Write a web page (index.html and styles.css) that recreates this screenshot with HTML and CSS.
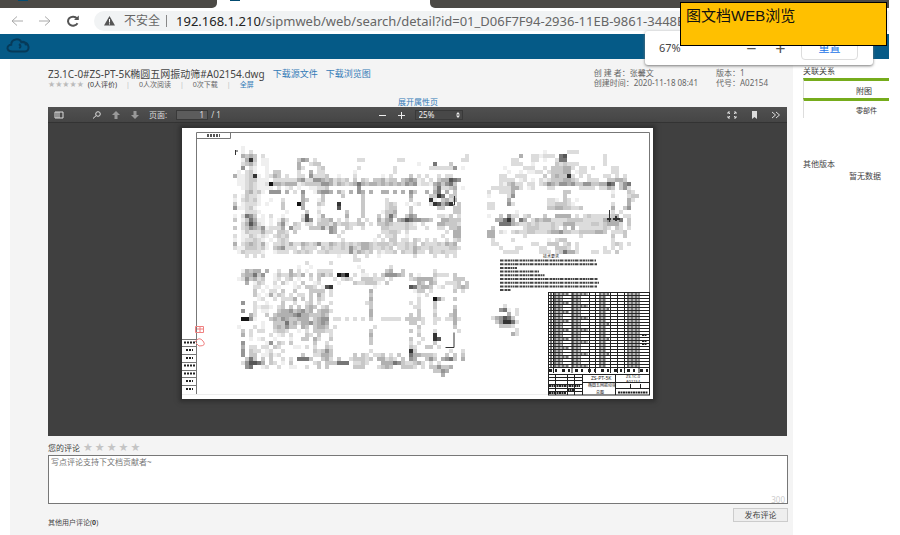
FILE: index.html
```html
<!DOCTYPE html>
<html lang="zh-CN">
<head>
<meta charset="utf-8">
<title>图文档WEB浏览</title>
<link rel="stylesheet" href="styles.css">
</head>
<body>
<div class="screen">
  <header class="browser">
    <div class="tabs"><span class="tab tab-left"></span><span class="tab tab-active"></span><span class="tab tab-right"></span></div>
    <div class="address-row">
      <button class="nav-btn" aria-label="后退"><svg viewBox="0 0 14 12"><path d="M13 6H2M7 1.500L2 6l5 4.500"/></svg></button>
      <button class="nav-btn" aria-label="前进"><svg viewBox="0 0 14 12"><path d="M1 6h11M7 1.500L12 6l-5 4.500"/></svg></button>
      <button class="nav-btn reload" aria-label="刷新"><svg viewBox="0 0 14 12"><path d="M11.500 8.200A5 4.500 0 1 1 11 3.400"/><path class="solid" d="M12.800 .5v4.500H8z"/></svg></button>
      <div class="url">
        <svg class="warn" viewBox="0 0 11 10"><path d="M5.500 0L11 9.500H0z" fill="#555"/><path d="M5.500 3v3.500M5.500 7.300v1.200" stroke="#fff"/></svg>
        <span class="unsafe">不安全</span><span class="divider"></span>
        <span class="address"><b>192.168.1.210</b>/sipmweb/web/search/detail?id=01_D06F7F94-2936-11EB-9861-3448E</span>
      </div>
    </div>
  </header>
  <nav class="brand">
    <svg class="cloud" viewBox="0 0 24 15"><path d="M7 13.500C-.5 14 .5 6.800 5.200 6.800C5.200 0 14 .2 15.300 4.200C18.500 3 20.200 5.500 19.500 7.400M15.300 4.200C24.500 3.500 24 13.500 19 13.500H7M13 6.200C15 7.500 15 9 13.200 10.300"/></svg>
  </nav>
  <div class="columns">
    <main class="main">
      <div class="doc-head">
        <div class="doc-left">
          <div class="title-row"><h1>Z3.1C-0#ZS-PT-5K椭圆五网振动筛#A02154.dwg</h1><a href="#">下载源文件</a><a href="#">下载浏览图</a></div>
          <div class="stats"><span class="stars">★★★★★</span><span class="votes">(0人评价)</span><i>|</i><span>0人次阅读</span><i>|</i><span>0次下载</span><i>|</i><a href="#">全屏</a></div>
        </div>
        <div class="doc-info">
          <div><p>创 建 者：张馨文</p><p>创建时间：2020-11-18 08:41</p></div>
          <div><p>版本：1</p><p>代号：A02154</p></div>
        </div>
      </div>
      <a class="expand" href="#">展开属性页</a>
      <section class="viewer">
        <div class="toolbar">
          <div class="tool-group">
            <button class="tool side" aria-label="侧栏"><svg viewBox="0 0 10 8"><path d="M1 1h8v6H1zM3 1v6M5 1v6"/></svg></button>
            <button class="tool" aria-label="查找"><svg viewBox="0 0 10 8"><circle cx="6" cy="3" r="2.300"/><path d="M4.200 4.600L1 7.500"/></svg></button>
            <button class="tool dim" aria-label="上一页"><svg viewBox="0 0 10 8"><path class="solid" d="M5 0l4 4H6.500v4h-3V4H1z"/></svg></button>
            <button class="tool dim" aria-label="下一页"><svg viewBox="0 0 10 8"><path class="solid" d="M5 8l4-4H6.500V0h-3v4H1z"/></svg></button>
            <label for="page">页面:</label><input id="page" value="1"><span>/ 1</span>
          </div>
          <div class="tool-group zooming">
            <button class="tool" aria-label="缩小"><svg viewBox="0 0 10 8"><path d="M2 4.500h7"/></svg></button>
            <button class="tool" aria-label="放大"><svg viewBox="0 0 10 8"><path d="M2 4.500h7M5.500 1v7"/></svg></button>
            <div class="select-wrap"><select aria-label="缩放"><option>25%</option></select><svg viewBox="0 0 6 8"><path class="solid" d="M3 1l2 2.500H1zM3 7l2-2.500H1z"/></svg></div>
          </div>
          <div class="tool-group right">
            <button class="tool" aria-label="全屏"><svg viewBox="0 0 10 8"><path d="M1 3V1h2M7 1h2v2M9 5v2H7M3 7H1V5M1 1l2 2M9 1L7 3M9 7L7 5M1 7l2-2"/></svg></button>
            <button class="tool" aria-label="书签"><svg viewBox="0 0 10 8"><path class="solid" d="M3 0h5v8L5.500 6 3 8z"/></svg></button>
            <button class="tool" aria-label="更多"><svg viewBox="0 0 10 8"><path d="M1 1l3.500 3L1 7M5 1l3.500 3L5 7"/></svg></button>
          </div>
        </div>
        <div class="canvas">
          <svg class="sheet" id="sheet" viewBox="182 128 471 271" role="img" aria-label="工程图">
            <g fill="none" stroke="#777"><path d="M196.500 394V132.500H649.500V394M196.500 138.500h34v-6"/><path d="M182 394.500h467" stroke="#eee"/></g>
            <path d="M207 135.500h13" stroke="#555" stroke-width="3" stroke-dasharray="2 1"/>
            <g id="mosaic" shape-rendering="crispEdges"></g>
            <g fill="none" stroke="#333"><path d="M235.500 150v5M236 151h2M445.500 347.500h8.500v-15M451.500 205h3v-9M609.500 210v12"/><path d="M607 219h4M613 219h7M616 216v5" stroke-width="2"/></g>
            <g class="stamp"><path d="M195.500 326.500h8v6h-8zM197 329h6M200 326v7M195 342q4-6 8-1t-4 5l-3-3"/></g>
            <path d="M182 339.500h14M182 346.500h14M182 354.500h14M182 362.500h14M182 370.500h14M182 377.500h14M182 385.500h14" stroke="#777"/>
            <path d="M184 342.500h11M184 365.500h11M184 373.500h11M186 350h7M186 358h7M186 381h7M186 389h7" stroke="#222" stroke-width="2" stroke-dasharray="2 1"/>
            <text x="543" y="258" class="tiny">技术要求</text>
            <g id="notes"></g><g id="bom"></g>
            <text x="591" y="380" class="label">ZS-PT-5K</text><text x="588" y="387" class="tiny">椭圆五网振动筛</text><text x="596" y="394" class="tiny">总图</text>
            <text x="626" y="378" class="tiny">Z3.1C-0</text><text x="626" y="383" class="tiny">A02154</text>
          </svg>
        </div>
      </section>
      <section class="comments">
        <div class="rate"><label for="comment">您的评论</label><span class="big-stars">★★★★★</span></div>
        <div class="comment-box"><textarea id="comment" placeholder="写点评论支持下文档贡献者~"></textarea><span class="count">300</span></div>
        <div class="submit-row"><button class="submit">发布评论</button></div>
        <p class="others">其他用户评论(<b>0</b>)</p>
      </section>
    </main>
    <aside class="sidebar">
      <h2>关联关系</h2>
      <a class="related" href="#">附图</a>
      <a class="related second" href="#">零部件</a>
      <h2 class="versions">其他版本</h2>
      <p class="empty">暂无数据</p>
    </aside>
  </div>
  <div class="zoom-popup"><span>67%</span><button class="zoom-btn" aria-label="缩小页面">−</button><button class="zoom-btn" aria-label="放大页面">+</button><button class="reset">重置</button></div>
  <div class="callout">图文档WEB浏览</div>
</div>
<script src="drawing.js"></script>
</body>
</html>
```
FILE: styles.css
```css
* { box-sizing: border-box; }
body { margin: 0; background: #fff; color: #444; font: 8px/10px "Noto Sans", "Noto Sans CJK SC", sans-serif; }
h1, h2, p { margin: 0; font-weight: 400; }
a { color: #337ab7; text-decoration: none; }
button, input, select, textarea { font: inherit; color: inherit; margin: 0; padding: 0; border: 0; background: none; }
svg { display: block; fill: none; stroke: currentColor; }
.solid { fill: currentColor; stroke: none; }
.screen { position: relative; margin-right: 11px; min-height: 100vh; display: flex; flex-direction: column; }

.tabs { display: flex; height: 8px; }
.tab { background: #4b4945; }
.tab-left { flex: 217; border-radius: 0 0 5px 0; background: linear-gradient(#034b70, #034b70) 18px 0 / 10px 1px no-repeat #4b4945; }
.tab-active { flex: 213; background: linear-gradient(#034b70, #034b70) 13px 0 / 10px 1px no-repeat #fff; }
.tab-right { flex: 459; border-radius: 0 0 0 5px; }
.address-row { display: flex; align-items: center; height: 26px; padding-left: 10px; gap: 14px; }
.nav-btn { width: 14px; height: 12px; color: #aaa; }
.reload { color: #555; stroke-width: 2px; }
.url { flex: 1; min-width: 0; height: 20px; display: flex; align-items: center; padding-left: 10px; border-radius: 10px 0 0 10px; background: #f1f3f4; color: #666; font-size: 13px; line-height: 20px; overflow: hidden; white-space: nowrap; }
.warn { width: 11px; height: 10px; stroke: none; }
.unsafe { margin-left: 9px; font-size: 12px; }
.divider { width: 1px; height: 12px; margin: 0 9px 0 6px; background: #888; }
.address b { font-weight: 400; color: #222; }
.brand { height: 25px; padding: 4px 6px; background: #055a87; color: #063a59; }
.cloud { width: 24px; height: 15px; stroke-width: 2px; }

.columns { flex: 1; display: flex; gap: 10px; padding-left: 10px; }
.main { flex: 1; min-width: 0; padding: 9px 5px 8px 38px; background: #f4f4f4; }
.doc-head { display: flex; justify-content: space-between; height: 29px; }
.title-row { display: flex; gap: 8px; font-size: 9px; line-height: 12px; }
.title-row h1 { font-size: 10px; }
.stats { display: flex; gap: 9px; font-size: 7px; color: #666; }
.stats i { color: #bbb; font-style: normal; }
.stars { margin-right: -5px; font-size: 8px; color: #bbb; font-family: "DejaVu Sans", sans-serif; }
.votes { color: #333; }
.doc-info { display: flex; gap: 18px; padding-right: 20px; color: #666; }
.expand { display: block; text-align: center; }
.viewer { margin-right: 1px; background: #404040; }
.toolbar { display: grid; grid-template-columns: 1fr auto 1fr; align-items: center; height: 16px; padding: 0 6px; background: linear-gradient(#505050, #454545); border-bottom: 1px solid #333; color: #ddd; }
.tool-group { display: flex; align-items: center; gap: 9px; }
.tool { width: 10px; height: 8px; }
.side { margin-right: 19px; }
.dim { color: #999; }
.tool-group input { width: 32px; height: 10px; padding-right: 3px; border: 1px solid #393939; background: #5c5c5c; text-align: right; line-height: 8px; }
.tool-group input + span { margin-left: -6px; }
.zooming { color: #eee; padding-left: 4px; }
.select-wrap { position: relative; }
.select-wrap select { width: 48px; height: 10px; padding-left: 3px; border: 1px solid #393939; background: #484848; appearance: none; line-height: 8px; }
.select-wrap svg { position: absolute; right: 2px; top: 1px; width: 6px; height: 8px; }
.right { justify-content: flex-end; gap: 12px; }
.canvas { display: flex; justify-content: center; padding: 5px 0 37px; }
.sheet { flex: 0 1 471px; min-width: 0; background: #fff; box-shadow: 0 0 4px 3px #303030; }
.stamp { stroke: #f08080; }
.tiny, .label { fill: #222; stroke: none; font-size: 4px; }
.label { font-size: 5px; }

.rate { display: flex; align-items: center; gap: 3px; height: 19px; padding-top: 4px; }
.big-stars { color: #c4c4c4; font: 11px/12px "DejaVu Sans", sans-serif; letter-spacing: 2px; }
.comment-box { position: relative; }
.comment-box textarea { display: block; width: 100%; height: 49px; padding: 1px 2px; border: 1px solid #777; background: #fff; resize: none; }
.comment-box textarea::placeholder { color: #777; opacity: 1; }
.count { position: absolute; right: 3px; bottom: -1px; color: #ccc; }
.submit-row { display: flex; justify-content: flex-end; padding-top: 4px; }
.submit { width: 55px; height: 14px; border: 1px solid #ccc; background: #eee; }
.others { margin-top: -4px; font-size: 7px; }

.sidebar { width: 86px; padding-top: 7px; }
.sidebar h2 { height: 12px; font-size: 8px; line-height: 10px; }
.related { display: block; height: 20px; padding: 5px 17px 0 0; border-top: 3px solid #76ac1c; border-left: 1px solid #ddd; color: #333; text-align: right; line-height: 10px; }
.second { padding-right: 12px; font-size: 7px; }
.sidebar .versions { margin-top: 41px; }
.empty { padding-right: 8px; text-align: right; }

.zoom-popup { position: absolute; right: 16px; top: 31px; display: flex; align-items: center; width: 228px; height: 34px; padding: 0 15px 0 14px; background: #fff; border-radius: 3px; box-shadow: 0 1px 3px #777; font-size: 11px; color: #444; }
.zoom-popup span { flex: 1; }
.zoom-btn { width: 29px; font-size: 18px; line-height: 18px; color: #555; }
.reset { width: 57px; height: 24px; margin-left: 6px; border: 1px solid #ddd; border-radius: 4px; color: #1a73e8; }
.callout { position: absolute; right: 2px; top: 2px; width: 207px; height: 44px; padding: 3px 5px; border: 1px solid #000; background: #ffc000; color: #111; font: 15px/20px "Liberation Sans", "Noto Sans CJK SC", sans-serif; }
```
FILE: drawing.js
```js
// Each digit is the darkness of one 4-unit cell; a dot is blank.
const views = [
  { x: 233, y: 146, rows: [
    "..1",
    "..1.2",
    "..4343.2..................................................2.",
    "..1483.11.......354.2..........22........22..............22.",
    "..2342.11.......4..233........................1...6...3.....",
    "..5.21..1.......42...23........2........2........2222225.1..",
    ".1.231..1.33....2..4.22.......1.........2",
    "4112381.1243.2..22.52223..1...2......1.2....3.2.2..2.22.....",
    ".11233111.2222224522554342323.3.32.334233.345412.2.344765...",
    ".1123211294434441233335542432346434434343435451221453563....",
    "..12321111.2.12.1..11223.......5..................362234.1..",
    "...34231.555.4.2.5..14554.42.4.54.4..44.4.4.53..4.46.4.3....",
    "2.13221..........4....3....3....3...........4....3386.33....",
    "1.23231..1..2....43..13.........3.....2.....3....81.3424....",
    "3.12221.1...3...94...32...8.....3.....232..1.12..287468.3...",
    "511231......3....4...1....7.....3.....233...3......33..33...",
    "...2221......1....3..2......3...3....1334...3..........33...",
    "1.2653.1.2..1....27..14.....4...3...3.363..354.....2213.2...",
    "3.136411.1.142...375.2334.2.2..3.2..4245.457655443..44333...",
    "..247521.1.351.32.22.333242332233.2.3343222321.2...443332...",
    "3.23543512224.522..3335254..32..2....332222322..2..22.334...",
    "..13222422.332.3........54.2.........22332.2.........2.44...",
    "2.1132121.2323............2.........2.223..1........2..44...",
    "1.122321.1.232.............2.......1.2.33.22.32.2.2..2.23...",
    "4.2343241.223242243235224323232344323332322323.322232434....",
    "211333231.345222.3222.323223253244322323.2232432232222332...",
    ".1322221..1222.23232.22322222524323.21223.322422.3223222....",
    "...2.2.2..................1...2..2..1........2....2..2.2....",
    "..............................22"
  ]},
  { x: 487, y: 150, rows: [
    "..............1.....222",
    "........4..221222.67.........2",
    "......22...22.1..266.........2",
    "......222..1.....323222......2",
    "....1....222..2.333442.22.2....22",
    ".....1..1.1122.233344.122......22",
    "...22..222....3.343382.2.2...22.2.2",
    "...2222.12.1.2123334432..222..33443",
    "...213422.22.2354355453355334476.356",
    ".22222442.12...22......2222.2243.352",
    "2..2224............33..........1...32",
    "1....25............3...........2...233",
    ".....4.........221.32.1............42",
    "22...52........2233321.........2...4",
    "22.............334433223.......4..35",
    ".......1.......................2.2",
    "1..3.522.23...3..4444.2.232222234.22",
    "..44684.64.24344222233332222245446.3",
    "...6664322323222322444222233234442.3",
    ".3.......233322232.3.4.22222232.32.2",
    "44.21.232233222344533223333443.2223.",
    "44.......2.............2.......3..3.",
    ".2....2........1.233...........2....",
    ".22........22..333.23.2........232.2",
    "...2...22....22..3332.2......2.2.2",
    "....2222.....222.236442...22.22.3"
  ]},
  { x: 233, y: 261, rows: [
    "..................2.....2",
    "................1..1...........1.......2",
    "..14344.4..2..4.2.1..2222.......2.....34..3.......2..",
    "..344635..13224324.3.3423.979.2.11.2.355543.3.1...3222.3....",
    ".1253423..12.23.1..2.3...2.232..333222.2....2344442....333..",
    "...4.132..2.31.1.3..12....1...3223331.3.......43.43..2223.3.",
    ".....22.1.11...12.332.178..........1........763443.12..2343.",
    ".....3.1.22.3..3...3333.2.........4..........133.2.....3.2..",
    ".....31.14132.2.22.3.42.2.........3...........1.2.......",
    "......12..2.2224.3.3.32...........4...........2...952..3....",
    "..5..2..1...3..2..23.2..2........23.........2.2...3.........",
    ".....21221.23.3.3.343.23..........3..........22...3....3....",
    "..5..2.11..344534534.3442.........4...........3...2....4....",
    "....42..3.34444564433343..........4.........3.3...3...34....",
    "..9951...343543344413455.22.2.2.2.3..22222.33332..22.2242...",
    ".......1..33363424453454....................33.2..2....4....",
    ".1...2.1..343533.43.3443.2.........2..........3........3....",
    "..3.2.22..2332..1.2.33322.........3.........3.2...2.....2...",
    "..4.2....2.12.2...32.3..2.........4...........3...8.........",
    "....1.12..1...1..33.42..3.........3.........3..2..87........",
    "..5.....15.32.3.....3..2..........3.........2.2...3.........",
    "..4.22.22.32...11.2.2..32...................32..33.2........",
    "..5.322.12..2.......32353.........2.........83........2..2..",
    "..5.33.11312.....3..22443.....3.32.223.2.3..6443332..3.3.3..",
    "...363.3.3..2.2.6663..342.3..233323.44232.3.54..353.4563.4..",
    "..257764.32.1.3.....23.333666.2232...44465322342.2.2........",
    "...56..12..2..11..2..3.3......333...2343..3332.2.335334.....",
    "..................................................3354......",
    "....................................................4......."
  ]},
  { x: 491, y: 304, rows: ["...2", "..561.2", "....4.2", "245763", ".358862", "..3332", "......2", ".....42"] }
];
const shades = [255, 239, 220, 200, 176, 149, 118, 86, 52, 20];
const cells = [];
for (const view of views) {
  view.rows.forEach((row, r) => {
    [...row].forEach((digit, c) => {
      if (digit !== ".") {
        const shade = shades[Number(digit)];
        cells.push(`<rect x="${view.x + c * 4}" y="${view.y + r * 4}" width="4" height="4" fill="rgb(${shade},${shade},${shade})" stroke="none"/>`);
      }
    });
  });
}
document.getElementById("mosaic").innerHTML = cells.join("");

const stroke = (d, width = 1, dash = "none", color = "#222") =>
  `<path d="${d}" stroke="${color}" stroke-width="${width}" stroke-dasharray="${dash}"/>`;
const noteEnds = [596, 597, 517, 539, 545, 598, 599, 597, 511];
document.getElementById("notes").innerHTML = noteEnds.map((end, i) =>
  stroke(`M500 ${260.5 + i * 3.7}H${end}`, 2, "3 .5 1 .5 2 .5", "#444")).join("");

// Parts list with the title block beneath it.
let bom = "";
for (let i = 0; i < 26; i += 1) {
  const y = 292.5 + i * 3;
  bom += stroke(`M548 ${y}H650`);
  if (i < 25) {
    const dash = "2 .5 1 .5";
    bom += stroke(`M550 ${y + 1.5}h2M554 ${y + 1.5}h${i % 3 ? 9 : 15}M572 ${y + 1.5}h${i % 4 ? 9 : 16}M599 ${y + 1.5}h${i % 5 ? 7 : 10}M627 ${y + 1.5}h11`, 2, dash, "#777");
  }
}
bom += stroke("M548.500 292V395M553.500 292V373M572 292V373M589.500 292V373M595.500 292V373M610.500 292V373M617.500 292V373M624.500 292V373M639 292V373M649.500 292V395");
bom += stroke("M548 374.500H650M548 395H650M582.500 374V395M615.500 374V395M582 382.500H650M615 388.500H650M548 377.500h34M548 380.500h34M548 384.500h34M548 388.500h34M548 391.500h34M555.500 374v21M567.500 374v21M574.500 374v21M630.500 384v5M640.500 384v5");
bom += stroke("M549 370.500h100", 3, "3 3 2 5", "#222");
bom += stroke("M549 386h31M567 390h7M549 393h17M618 392.500h30M642 335h5M642 341h5M642 344h5", 2, "2 .5", "#222");
document.getElementById("bom").innerHTML = bom;
```
